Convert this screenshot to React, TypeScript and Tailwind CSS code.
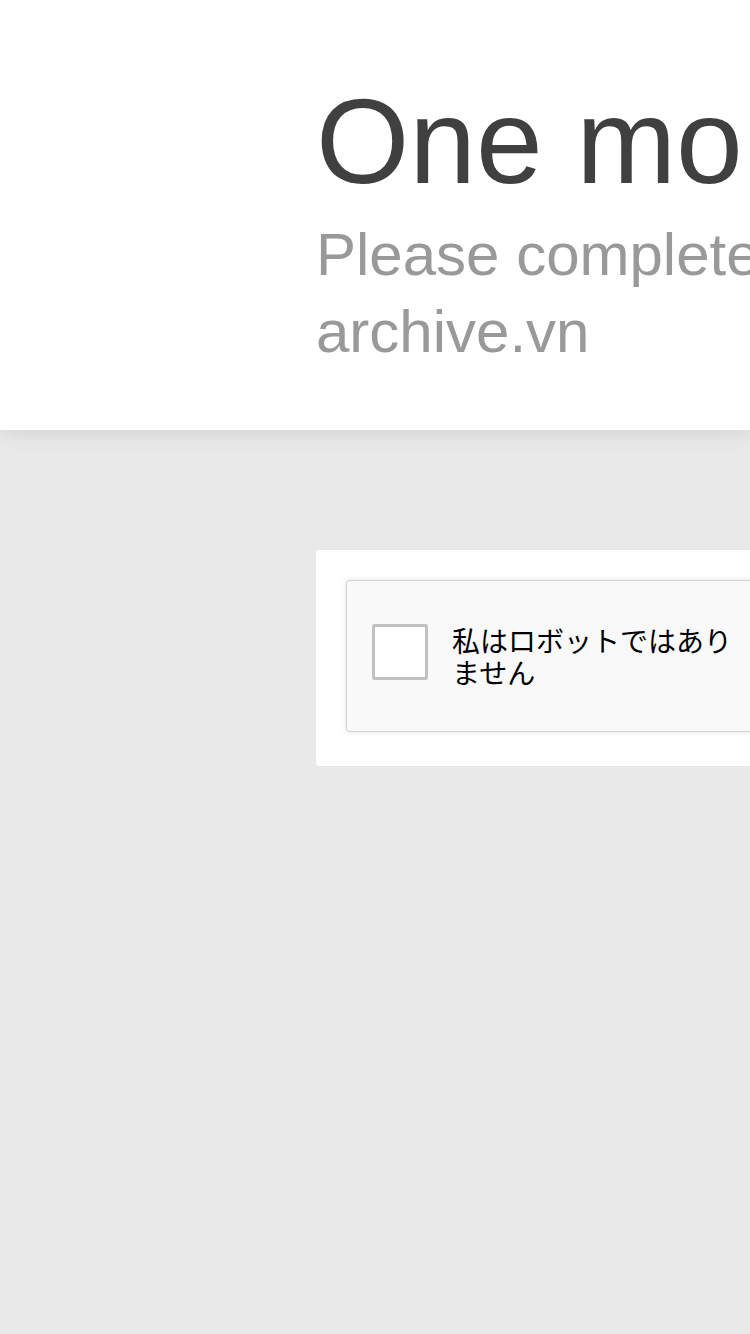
export default function App() {
    return (
        <div className="min-h-[1334px] w-full overflow-hidden bg-[#e9e9e9] font-['Liberation_Sans',Arial,sans-serif]">
            {/* Header */}
            <header className="relative z-10 bg-white pl-[316px] pt-[69px] pb-[60px] shadow-[0_0_24px_rgba(0,0,0,0.12)]">
                <h1 className="whitespace-nowrap text-[120px] leading-[144px] font-normal text-[#404040]">
                    One more step
                </h1>
                <p className="mt-[3px] whitespace-nowrap text-[60px] leading-[77px] text-[#999999]">
                    Please complete the security check to access
                    <br />
                    archive.vn
                </p>
            </header>

            {/* Captcha card */}
            <div className="pl-[316px] pt-[120px]">
                <div className="w-[680px] rounded-[3px] bg-white pt-[30px] pb-[34px] pl-[30px]">
                    <div className="flex h-[152px] w-[608px] items-center rounded-[3px] border border-[#d3d3d3] bg-[#f9f9f9] pl-[25px] shadow-[0_0_4px_1px_rgba(0,0,0,0.08)]">
                        <div className="mb-[8px] h-[56px] w-[56px] shrink-0 rounded-[3px] border-[3px] border-[#c1c1c1] bg-white" />
                        <span className="ml-[24px] w-[300px] text-[28px] leading-[32px] text-black font-['Noto_Sans_CJK_JP','Liberation_Sans',sans-serif]">
                            私はロボットではありません
                        </span>
                    </div>
                </div>
            </div>
        </div>
    );
}
